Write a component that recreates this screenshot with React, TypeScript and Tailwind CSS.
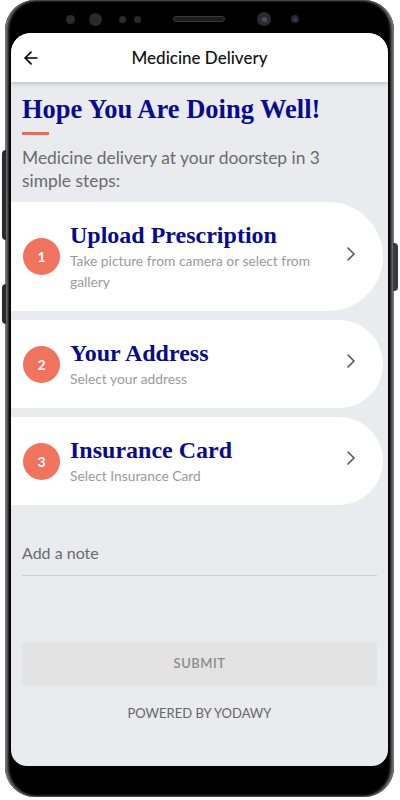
import React from 'react';
import { ArrowLeft, ChevronRight } from 'lucide-react';

const steps = [
  { n: 1, title: 'Upload Prescription', sub: 'Take picture from camera or select from gallery' },
  { n: 2, title: 'Your Address', sub: 'Select your address' },
  { n: 3, title: 'Insurance Card', sub: 'Select Insurance Card' },
];

const sans = { fontFamily: 'Lato, "Noto Sans", sans-serif' };
const serif = { fontFamily: '"Liberation Serif", "Times New Roman", serif' };

function StepCard({ n, title, sub }: { n: number; title: string; sub: string }) {
  return (
    <div className="mr-[5px] flex items-center rounded-r-full bg-white py-[19px] pl-[12px] pr-[20px]">
      <div className="flex h-[37px] w-[37px] shrink-0 items-center justify-center rounded-full bg-[#ef735d] text-[14px] font-bold text-white">
        {n}
      </div>
      <div className="ml-[10px] flex-1">
        <div className="text-[24px] font-bold leading-[28px] text-[#0a0a8c]" style={serif}>
          {title}
        </div>
        <div className="mt-[1px] pr-[4px] text-[13.8px] leading-[21px] text-[#9a9a9a]">{sub}</div>
      </div>
      <ChevronRight size={24} strokeWidth={1.6} className="-mt-[6px] text-[#555]" />
    </div>
  );
}

export default function App() {
  return (
    <div className="relative h-[800px] w-[400px] overflow-hidden bg-white" style={sans}>
      {/* side buttons */}
      <div className="absolute left-[2px] top-[150px] h-[90px] w-[4px] rounded-l-sm bg-[#2a2a2a]" />
      <div className="absolute left-[2px] top-[284px] h-[40px] w-[4px] rounded-l-sm bg-[#2a2a2a]" />
      <div className="absolute left-[393px] top-[243px] h-[48px] w-[5px] rounded-r-sm bg-[#3a3a3a]" />

      <div className="ml-[5px] flex h-[797px] w-[389px] flex-col rounded-[30px] bg-black px-[6px] shadow-[inset_-3px_0_3px_#777,inset_3px_0_3px_#777]">
        {/* top bezel */}
        <div className="flex h-[33px] shrink-0 items-center pt-[5px]">
          <div className="ml-[55px] h-[9px] w-[9px] rounded-full bg-[#2b2b2b]" />
          <div className="ml-[14px] h-[13px] w-[13px] rounded-full bg-[#2b2b2b]" />
          <div className="ml-[17px] h-[7px] w-[7px] rounded-full bg-[#2b2b2b]" />
          <div className="ml-[8px] h-[7px] w-[7px] rounded-full bg-[#2b2b2b]" />
          <div className="ml-[32px] h-[6px] w-[52px] rounded-full border border-[#3a3a3a] bg-[#1c1c1c]" />
          <div className="ml-[32px] flex h-[14px] w-[14px] items-center justify-center rounded-full bg-[#2b2b2b]">
            <div className="h-[5px] w-[5px] rounded-full bg-[#4a4a66]" />
          </div>
          <div className="ml-[20px] flex h-[8px] w-[8px] items-center justify-center rounded-full bg-[#26263a]">
            <div className="h-[3px] w-[3px] rounded-full bg-[#3d3d70]" />
          </div>
        </div>

        {/* screen */}
        <div className="flex h-[733px] shrink-0 flex-col overflow-hidden rounded-t-[20px] rounded-b-[16px] bg-[#e9ebee]">
          <div className="relative z-10 flex h-[49px] shrink-0 items-center bg-white px-[10px] shadow-[0_2px_4px_rgba(0,0,0,0.18)]">
            <ArrowLeft size={20} strokeWidth={2} className="text-black" />
            <div className="flex-1 pr-[20px] text-center text-[17px] font-medium text-[#111]">
              Medicine Delivery
            </div>
          </div>

          <div className="px-[11px] pt-[11px]">
            <div className="text-[26.5px] font-bold leading-[32px] text-[#0a0a8c]" style={serif}>
              Hope You Are Doing Well!
            </div>
            <div className="mt-[7px] h-[3px] w-[27px] bg-[#ef6a53]" />
            <div className="mt-[11px] max-w-[310px] text-[17.4px] leading-[23px] text-[#6b6b6b]">
              Medicine delivery at your doorstep in 3 simple steps:
            </div>
          </div>

          <div className="mt-[10px] flex flex-col gap-[9px]">
            {steps.map(s => (
              <StepCard key={s.n} {...s} />
            ))}
          </div>

          <div className="mx-[11px] mt-[37px] border-b border-[#c9cdd2] pb-[11px] text-[16px] leading-[22px] text-[#6b6b6b]">
            Add a note
          </div>

          <div className="mx-[11px] mt-[66px] flex h-[44px] items-center justify-center rounded-[4px] bg-[#e3e3e3] text-[13px] font-semibold tracking-[0.5px] text-[#8c8c8c]">
            SUBMIT
          </div>

          <div className="mt-[18px] text-center text-[13px] leading-[18px] text-[#666]">
            POWERED BY YODAWY
          </div>
        </div>
      </div>
    </div>
  );
}
